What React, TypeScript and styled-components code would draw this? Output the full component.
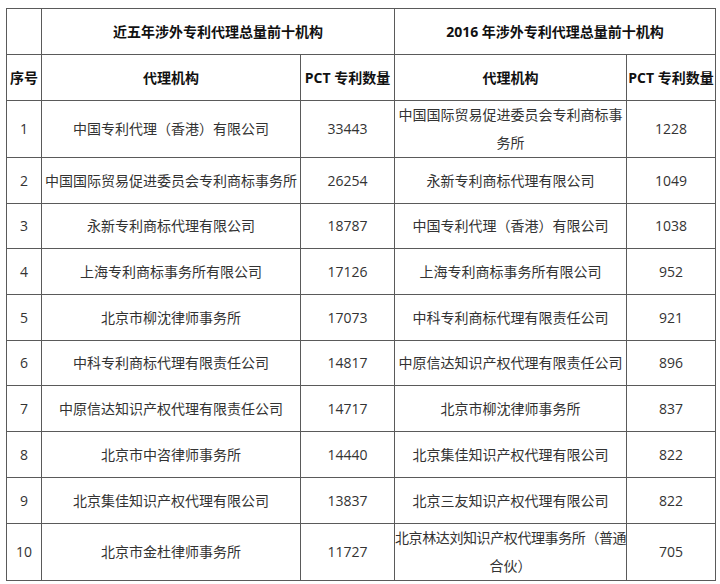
import React from "react";
import styled, { createGlobalStyle } from "styled-components";

const Global = createGlobalStyle`
  html, body { margin: 0; padding: 0; background: #fff; }
  body { font-family: "Open Sans", "Noto Sans CJK SC", sans-serif; }
`;

const Page = styled.div`
  padding: 8px 0 0 6px;
`;

const Table = styled.table`
  width: 709px;
  table-layout: fixed;
  border-collapse: collapse;
  font-size: 14px;
  line-height: 28px;
  color: #333;
`;

const Row = styled.tr<{ $h: number }>`
  height: ${(p) => p.$h}px;
`;

const Th = styled.th`
  border: 1px solid #5a5a5a;
  padding: 0;
  font-weight: 700;
  color: #111;
  text-align: center;
  vertical-align: middle;
  white-space: nowrap;
`;

const Td = styled.td`
  border: 1px solid #5a5a5a;
  padding: 0;
  text-align: center;
  vertical-align: middle;
`;

const Tight = styled.span`
  white-space: nowrap;
  letter-spacing: -0.4px;
`;

type Item = { a: React.ReactNode; an: number; b: React.ReactNode; bn: number };

const rows: Item[] = [
  { a: "中国专利代理（香港）有限公司", an: 33443, b: "中国国际贸易促进委员会专利商标事务所", bn: 1228 },
  { a: "中国国际贸易促进委员会专利商标事务所", an: 26254, b: "永新专利商标代理有限公司", bn: 1049 },
  { a: "永新专利商标代理有限公司", an: 18787, b: "中国专利代理（香港）有限公司", bn: 1038 },
  { a: "上海专利商标事务所有限公司", an: 17126, b: "上海专利商标事务所有限公司", bn: 952 },
  { a: "北京市柳沈律师事务所", an: 17073, b: "中科专利商标代理有限责任公司", bn: 921 },
  { a: "中科专利商标代理有限责任公司", an: 14817, b: "中原信达知识产权代理有限责任公司", bn: 896 },
  { a: "中原信达知识产权代理有限责任公司", an: 14717, b: "北京市柳沈律师事务所", bn: 837 },
  { a: "北京市中咨律师事务所", an: 14440, b: "北京集佳知识产权代理有限公司", bn: 822 },
  { a: "北京集佳知识产权代理有限公司", an: 13837, b: "北京三友知识产权代理有限公司", bn: 822 },
  {
    a: "北京市金杜律师事务所",
    an: 11727,
    b: (
      <>
        <Tight>北京林达刘知识产权代理事务所（普通</Tight>
        <br />
        合伙）
      </>
    ),
    bn: 705,
  },
];

const heights = [57, 46, 45, 46, 46, 45, 46, 46, 46, 56];

export default function App() {
  return (
    <Page>
      <Global />
      <Table>
        <colgroup>
          <col style={{ width: 35 }} />
          <col style={{ width: 259 }} />
          <col style={{ width: 94 }} />
          <col style={{ width: 232 }} />
          <col style={{ width: 89 }} />
        </colgroup>
        <thead>
          <Row $h={46}>
            <Th />
            <Th colSpan={2}>近五年涉外专利代理总量前十机构</Th>
            <Th colSpan={2}>2016 年涉外专利代理总量前十机构</Th>
          </Row>
          <Row $h={46}>
            <Th>序号</Th>
            <Th>代理机构</Th>
            <Th>PCT 专利数量</Th>
            <Th>代理机构</Th>
            <Th>PCT 专利数量</Th>
          </Row>
        </thead>
        <tbody>
          {rows.map((r, i) => (
            <Row key={i} $h={heights[i]}>
              <Td>{i + 1}</Td>
              <Td>{r.a}</Td>
              <Td>{r.an}</Td>
              <Td>{r.b}</Td>
              <Td>{r.bn}</Td>
            </Row>
          ))}
        </tbody>
      </Table>
    </Page>
  );
}
